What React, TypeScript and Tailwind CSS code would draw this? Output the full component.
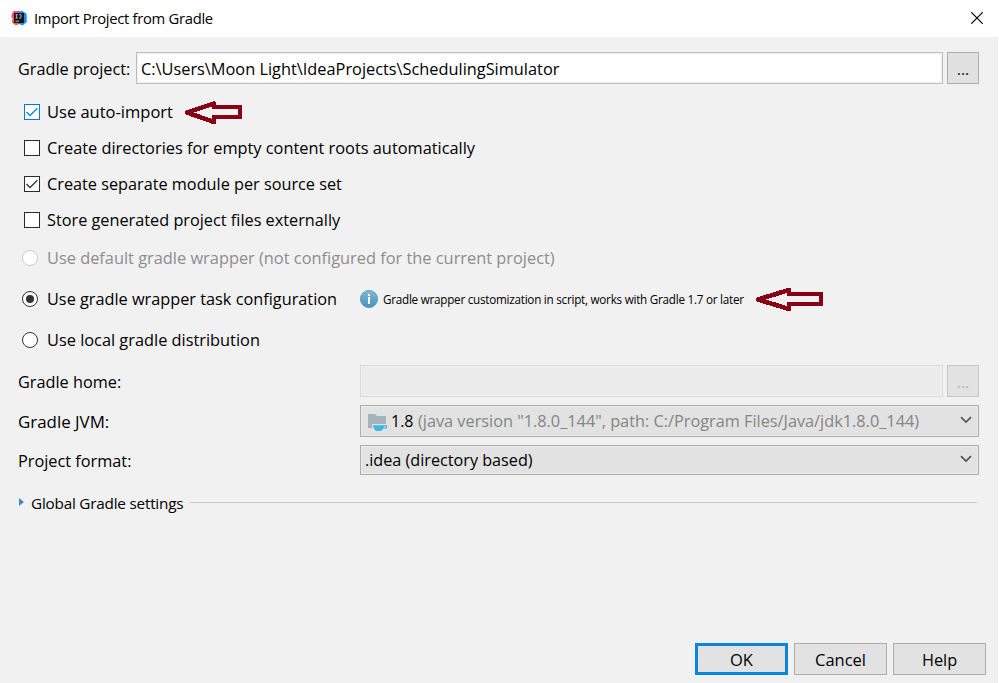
import type { ReactNode } from "react";

function Check({ label, checked, focused, size, children }: { label: string; checked?: boolean; focused?: boolean; size: string; children?: ReactNode }) {
  return (
    <div className="flex h-9 items-center pl-6">
      <div className={`h-4 w-4 shrink-0 border bg-white ${focused ? "border-[#0078d7] text-[#1a86dc]" : "border-[#2b2b2b] text-[#3c3c3c]"}`}>
        {checked && (
          <svg viewBox="0 0 14 14" className="block h-3.5 w-3.5" fill="none" stroke="currentColor" strokeWidth="1.4">
            <path d="M1.5 7 L5 10.6 L12.4 3.2" />
          </svg>
        )}
      </div>
      <span className={`ml-[7px] ${size}`}>{label}</span>
      {children}
    </div>
  );
}

function Radio({ label, selected, disabled, height, size, children }: { label: string; selected?: boolean; disabled?: boolean; height: string; size: string; children?: ReactNode }) {
  return (
    <div className={`flex items-center pl-[22px] ${height}`}>
      <div className={`flex h-4 w-4 shrink-0 items-center justify-center rounded-full border bg-white ${disabled ? "border-[#cccccc]" : "border-[#333333]"}`}>
        {selected && <div className="h-2 w-2 rounded-full bg-[#333333]" />}
      </div>
      <span className={`ml-[9px] ${size} ${disabled ? "text-[#8d8d8d]" : ""}`}>{label}</span>
      {children}
    </div>
  );
}

function Arrow({ long, className }: { long?: boolean; className: string }) {
  return (
    <svg width={long ? 67 : 57} height="24" className={`shrink-0 ${className}`} fill="none" stroke="#880015" strokeWidth="4.6" strokeLinejoin="round" shapeRendering="crispEdges">
      <path d={long ? "M2 11.5 L33 2 V6 H65 V16 H33 V21 Z" : "M2 11.5 L29 2.5 V6 H55 V16 H29 V21 Z"} />
    </svg>
  );
}

function Chevron() {
  return (
    <svg width="12" height="8" viewBox="0 0 12 8" className="mr-[6px] mb-0.5 ml-auto shrink-0" fill="none" stroke="#555555" strokeWidth="1.7">
      <path d="M1 1.2 L6 6 L11 1.2" />
    </svg>
  );
}

function Browse({ disabled }: { disabled?: boolean }) {
  return (
    <div className={`ml-1 flex h-8 w-8 shrink-0 items-end justify-center border pb-[8px] ${disabled ? "border-[#c6c6c6] bg-[#e2e2e2] text-[#b4b4b4]" : "border-[#adadad] bg-[#e1e1e1] text-[#1a1a1a]"}`}>
      <span className="text-[16px] leading-[12px]">...</span>
    </div>
  );
}

function IdeaLogo() {
  return (
    <svg width="16" height="16" viewBox="0 0 16 16" className="mb-px ml-[11px] shrink-0">
      <path d="M1 3.6 L2.6 1 L8 1 L8 14 L5 15 L1.3 12.8 L2.2 9 L0.3 7 Z" fill="#fe4a75" />
      <path d="M1.2 9 L5 11 L7 15 L4.5 15.2 L1 12.5 Z" fill="#f9683f" />
      <path d="M8 2 L11 0.8 L15.6 3.8 L15.8 12 L11.5 15.6 L7 13.5 Z" fill="#1a8df5" />
      <path d="M6.5 1 L9.5 1 L9 4 L6 4 Z" fill="#b74af7" />
      <rect x="3" y="3" width="10" height="10" fill="#171717" />
      <path d="M4.5 4.7 H6.7 M5.6 4.7 V8 M4.5 8 H6.7 M8.2 4.7 H10 V7.2 Q10 8.1 9.2 8.1 H8" stroke="#d8d8d8" strokeWidth="0.8" fill="none" />
      <path d="M4.4 11.2 H8" stroke="#d8d8d8" strokeWidth="0.8" />
    </svg>
  );
}

function JdkIcon() {
  return (
    <svg width="20" height="19" viewBox="0 0 20 19" className="mt-[2px] ml-[7px] shrink-0">
      <path d="M0 1 H7 L9 3 H18 V15 H0 Z" fill="#a7b3bb" />
      <path d="M4 11 H20 V19 H6.5 Q4 16 4 11 Z" fill="#e2e2e2" />
      <path d="M5 12.3 H19 V15.4 H15.2 Q14 17.6 12.5 18 H8 Q5.6 16.5 5 12.3 Z" fill="#40b6e0" />
      <path d="M16 13.4 H17.8 V14.4 H15.8 Z" fill="#e2e2e2" />
    </svg>
  );
}

function InfoIcon() {
  return (
    <svg width="18" height="18" viewBox="0 0 18 18" className="ml-[23px] shrink-0">
      <defs>
        <linearGradient id="info" x1="0" y1="0" x2="0" y2="1">
          <stop offset="0" stopColor="#82b8d2" />
          <stop offset="1" stopColor="#4492be" />
        </linearGradient>
      </defs>
      <circle cx="9" cy="9" r="8.6" fill="url(#info)" stroke="#4b96bf" strokeWidth="0.8" />
      <rect x="8" y="4" width="2" height="2" fill="#fff" />
      <rect x="8" y="7" width="2" height="7" fill="#fff" />
    </svg>
  );
}

export default function App() {
  return (
    <div className="h-[683px] w-[999px] bg-white pr-px font-['Open_Sans','Noto_Sans',sans-serif] leading-none whitespace-nowrap text-black">
      <div className="flex h-full flex-col bg-[#f1f1f1]">
        <header className="flex h-[37px] shrink-0 items-center bg-white">
          <IdeaLogo />
          <span className="mb-px ml-[7px] text-[14.8px] tracking-[-0.3px]">Import Project from Gradle</span>
          <svg width="12" height="12" viewBox="0 0 12 12" className="mr-[15px] mb-px ml-auto" stroke="#000" strokeWidth="1.2">
            <path d="M0.3 0.3 L11.7 11.7 M11.7 0.3 L0.3 11.7" />
          </svg>
        </header>

        <div className="mt-[15px] flex h-8 shrink-0 items-center pl-[18px]">
          <span className="w-[118px] pt-0.5 text-[16.25px]">Gradle project:</span>
          <div className="flex h-8 w-[807px] items-center border border-[#bcbcbc] bg-white pt-0.5 pl-1 text-[16.33px] shadow-[inset_0_0_0_1px_#f1f1f1]">
            C:\Users\Moon Light\IdeaProjects\SchedulingSimulator
          </div>
          <Browse />
        </div>

        <div className="mt-[10px] shrink-0">
          <Check label="Use auto-import" checked focused size="w-[126px] text-[16.5px]">
            <Arrow className="ml-3 mt-px" />
          </Check>
          <Check label="Create directories for empty content roots automatically" size="text-[16.35px]" />
          <Check label="Create separate module per source set" checked size="text-[16.26px]" />
          <Check label="Store generated project files externally" size="text-[16.27px]" />
        </div>
        <div className="shrink-0">
          <Radio label="Use default gradle wrapper (not configured for the current project)" disabled height="h-10" size="text-[16.38px]" />
          <Radio label="Use gradle wrapper task configuration" selected height="h-[42px]" size="w-[290px] text-[16.3px]">
            <InfoIcon />
            <span className="ml-[5px] w-[361px] pt-px text-[11.7px] tracking-[-0.25px]">Gradle wrapper customization in script, works with Gradle 1.7 or later</span>
            <Arrow long className="mt-px ml-3" />
          </Radio>
          <Radio label="Use local gradle distribution" height="h-10" size="text-[16.35px]" />
        </div>

        <div className="mt-[5px] flex h-8 shrink-0 items-center pl-[18px]">
          <span className="w-[342px] pt-0.5 text-[16.3px]">Gradle home:</span>
          <div className="h-8 w-[583px] border border-[#d9d9d9] bg-[#ebebeb] shadow-[inset_0_0_0_1px_#f1f1f1]" />
          <Browse disabled />
        </div>
        <div className="mt-2 flex h-8 shrink-0 items-center pl-[18px]">
          <span className="w-[342px] pt-0.5 text-[16.9px]">Gradle JVM:</span>
          <div className="flex h-8 w-[619px] items-center border border-[#adadad] bg-[#e2e2e2] shadow-[inset_0_0_0_1px_#ececec]">
            <JdkIcon />
            <span className="ml-[3px] w-[27px] text-[16px]">1.8</span>
            <span className="text-[16.3px] text-[#858585]">(java version "1.8.0_144", path: C:/Program Files/Java/jdk1.8.0_144)</span>
            <Chevron />
          </div>
        </div>
        <div className="mt-2 flex h-[30px] shrink-0 items-center pl-[18px]">
          <span className="w-[342px] pt-0.5 text-[16.3px]">Project format:</span>
          <div className="flex h-[30px] w-[619px] items-center border border-[#adadad] bg-[#e2e2e2] pl-1 shadow-[inset_0_0_0_1px_#ececec]">
            <span className="text-[16.2px]">.idea (directory based)</span>
            <Chevron />
          </div>
        </div>

        <div className="mt-[15px] flex h-6 shrink-0 items-center pl-[19px]">
          <svg width="5" height="8" className="shrink-0">
            <path d="M0 0 L5 4 L0 8 Z" fill="#3f8fba" />
          </svg>
          <span className="ml-[7px] w-[159px] pt-[3px] text-[15.3px] tracking-[-0.22px]">Global Gradle settings</span>
          <div className="mr-[21px] h-px flex-1 bg-[#c9c9c9]" />
        </div>

        <footer className="mt-auto mb-2 flex shrink-0 justify-end gap-[6px] pr-3">
          <div className="flex h-8 w-[93px] items-center justify-center border-3 border-[#0a84dc] bg-[#e2e2e2] pt-[3px] text-[16.5px]">OK</div>
          <div className="flex h-8 w-[93px] items-center justify-center border border-[#adadad] bg-[#e2e2e2] pt-[3px] text-[16.5px]">Cancel</div>
          <div className="flex h-8 w-[93px] items-center justify-center border border-[#adadad] bg-[#e2e2e2] pt-[3px] text-[16.3px]">Help</div>
        </footer>
      </div>
    </div>
  );
}
